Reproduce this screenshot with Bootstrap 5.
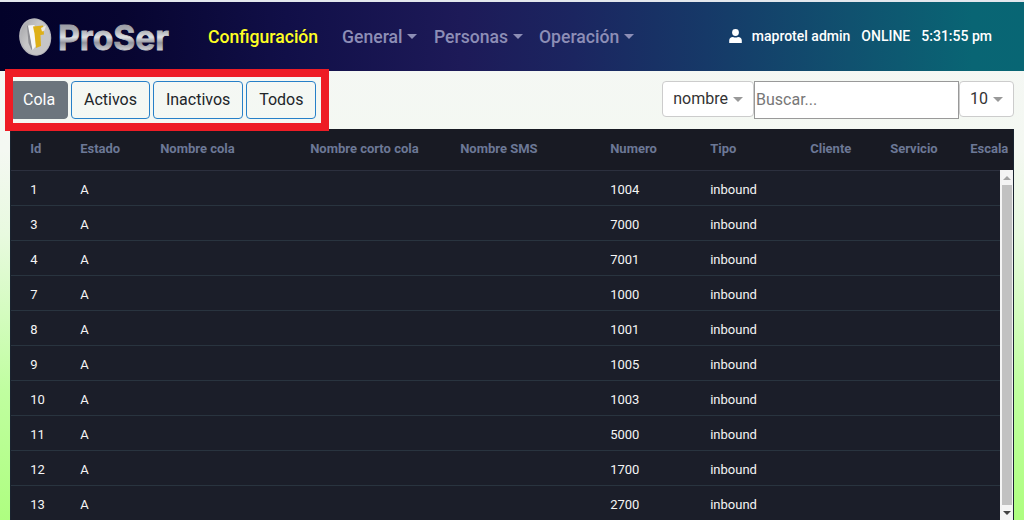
<!DOCTYPE html>
<html lang="es">
<head>
<meta charset="utf-8">
<meta name="viewport" content="width=device-width, initial-scale=1">
<title>ProSer</title>
<link href="https://cdn.jsdelivr.net/npm/bootstrap@5.3.0/dist/css/bootstrap.min.css" rel="stylesheet">
<style>
body{font-family:Roboto,sans-serif;height:520px;overflow:hidden;background:linear-gradient(#f5f7f5 0,#f4f8f2 150px,#e8fadf 235px,#c0fea0 390px,#aefe80 520px);border-top:2px solid #e3e7ed}
.app-nav{height:69px;background:linear-gradient(90deg,#03022a 0,#070530 12%,#110f48 28%,#1d1a58 45%,#1b2560 56%,#163968 69%,#10516f 83%,#096574 95%,#086674 100%)}
.app-nav .nav-link{font-size:17.6px;font-weight:500;line-height:27px;color:#8d8eb6;padding:2px 0 0;white-space:nowrap}
.app-nav .nav-link.active{color:#ff2;}
.app-nav .dropdown-toggle::after{margin-left:4.5px;border-width:5.4px;border-bottom:0}
.status{font-size:14px;font-weight:500;line-height:20px;padding-bottom:2px}
.tools{height:58px;padding:10px 10px 0}
.tools .btn{height:38px;border-radius:4px;font-size:16px;line-height:24px;padding:6px 12px;color:#212529;white-space:nowrap}
.tools .btn-line{border:1px solid #2780c8}
.tools .btn-cola{background:#6c757d;border-color:#6c757d;color:#fff}
.tools .btn-pick{height:36px;background:#fff;border:1px solid #ccc;padding:4px 10px;color:#333}
.btn-pick::after{color:#999;margin-left:5px;border-width:5px;border-bottom:0;vertical-align:2px}
.finder{width:205px;height:38px;border:1px solid #999;background:#fff;padding:0 1px 2px;font-size:16px;color:#333}
.finder::placeholder{color:#777;opacity:1}
.marker{left:5px;top:69px;width:324px;height:62px;border:8px solid #ee1c25;pointer-events:none;z-index:2}
.grid-box{margin:0 10px;height:391px;background:#1b1e29;border-left:1px solid #1a2430;border-right:1px solid #1a2430;overflow:hidden;font-size:13px}
.q-row{display:grid;grid-template-columns:50px 80px 150px 150px 150px 100px 100px 80px 80px 60px;padding-left:19.2px;height:35px;line-height:38px;border-bottom:1px solid #29343f;color:#f5f5f5;white-space:nowrap}
.q-head{height:42px;line-height:39px;background:#181a23;color:#6c7896;font-weight:700;border-bottom-color:#2c303e}
.q-rows{width:989px;margin-top:0}
.vbar{width:13px;background:#f4f4f4;margin-top:-1px;position:relative;z-index:1;height:350px}
.vbar .thumb{flex:1;margin:0 1px 0 2px;background:#c1c1c1}
.vbar svg{display:block;height:15px;width:13px}
</style>
</head>
<body>
<nav class="app-nav d-flex align-items-center">
  <svg class="flex-shrink-0" width="208" height="69" viewBox="0 2 208 69" role="img" aria-label="ProSer">
    <defs>
      <linearGradient id="metal" x1="0" y1="0" x2="0" y2="1"><stop offset="0" stop-color="#888b94"/><stop offset=".3" stop-color="#a9abb1"/><stop offset=".48" stop-color="#dfe1e4"/><stop offset=".62" stop-color="#92949d"/><stop offset=".8" stop-color="#cccdd2"/><stop offset="1" stop-color="#aaacb3"/></linearGradient>
      <linearGradient id="coin" x1="0" y1="0" x2="1" y2="1"><stop offset="0" stop-color="#a0a0a4"/><stop offset=".4" stop-color="#c6c6c7"/><stop offset="1" stop-color="#c5c5c7"/></linearGradient>
    </defs>
    <ellipse cx="35.2" cy="37" rx="16" ry="18.8" transform="rotate(-9 35.2 37)" fill="#b5b5ba"/>
    <ellipse cx="35.5" cy="37" rx="14.6" ry="17.8" transform="rotate(-9 35.5 37)" fill="url(#coin)"/>
    <path d="M27 26l1.500-1 4 24-1 1-3-7z" fill="#8f8f94"/>
    <path d="M28 25.500l6.500-.5 1.500 21-3.500 4z" fill="#f7f7f7"/>
    <path d="M33 26.500l10-1 1 9-3.500.5.500 11-5 2-1.500-14.500z" fill="#deb018"/>
    <path d="M41 28l5-2.500-1.500 5-2.500 1z" fill="#eeeae0"/>
    <text x="58" y="50" font-family="Inter, sans-serif" font-weight="700" font-size="33.500" textLength="111" lengthAdjust="spacingAndGlyphs" fill="url(#metal)" stroke="url(#metal)" stroke-width=".8">ProSer</text>
  </svg>
  <div class="d-flex align-items-center">
    <a class="nav-link active" style="width:134px">Configuración</a>
    <a class="nav-link dropdown-toggle" style="width:92px">General</a>
    <a class="nav-link dropdown-toggle" style="width:105px">Personas</a>
    <a class="nav-link dropdown-toggle">Operación</a>
  </div>
  <div class="status d-flex align-items-center ms-auto text-white">
    <svg width="13" height="14" viewBox="0 0 13 14" fill="#fff"><circle cx="6.500" cy="3.500" r="3.400"/><path d="M.2 14v-2.500Q.3 8 4 8q2.500 1.200 5 0 3.700 0 3.800 3.500V14z"/></svg>
    <span style="margin-left:10px">maprotel admin</span><span style="margin-left:11px">ONLINE</span><span style="margin:0 32px 0 11px">5:31:55 pm</span>
  </div>
</nav>
<div class="tools d-flex align-items-start">
  <div class="d-flex" style="gap:2.9px">
    <button class="btn btn-cola">Cola</button><button class="btn btn-line">Activos</button><button class="btn btn-line">Inactivos</button><button class="btn btn-line">Todos</button>
  </div>
  <div class="d-flex align-items-start ms-auto">
    <button class="btn btn-pick dropdown-toggle">nombre</button><input class="finder" placeholder="Buscar..."><button class="btn btn-pick dropdown-toggle">10</button>
  </div>
</div>
<div class="marker position-absolute"></div>
<main class="grid-box">
  <div class="q-row q-head"><span>Id</span><span>Estado</span><span>Nombre cola</span><span>Nombre corto cola</span><span>Nombre SMS</span><span>Numero</span><span>Tipo</span><span>Cliente</span><span>Servicio</span><span>Escala</span></div>
  <div class="d-flex">
    <div class="q-rows" id="rows"></div>
    <div class="vbar d-flex flex-column">
      <svg viewBox="0 0 13 15"><path d="M3 10l4-4 4 4z" fill="#a3a3a3"/></svg><div class="thumb"></div><svg viewBox="0 0 13 15"><path d="M3 6h8l-4 4z" fill="#444"/></svg>
    </div>
  </div>
</main>
<script>
const queues=[[1,1004],[3,7000],[4,7001],[7,1000],[8,1001],[9,1005],[10,1003],[11,5000],[12,1700],[13,2700]];
document.getElementById('rows').innerHTML=queues.map(([id,n])=>`<div class="q-row"><span>${id}</span><span>A</span><span></span><span></span><span></span><span>${n}</span><span>inbound</span></div>`).join('');
</script>
<script src="https://cdn.jsdelivr.net/npm/bootstrap@5.3.0/dist/js/bootstrap.bundle.min.js"></script>
</body>
</html>
